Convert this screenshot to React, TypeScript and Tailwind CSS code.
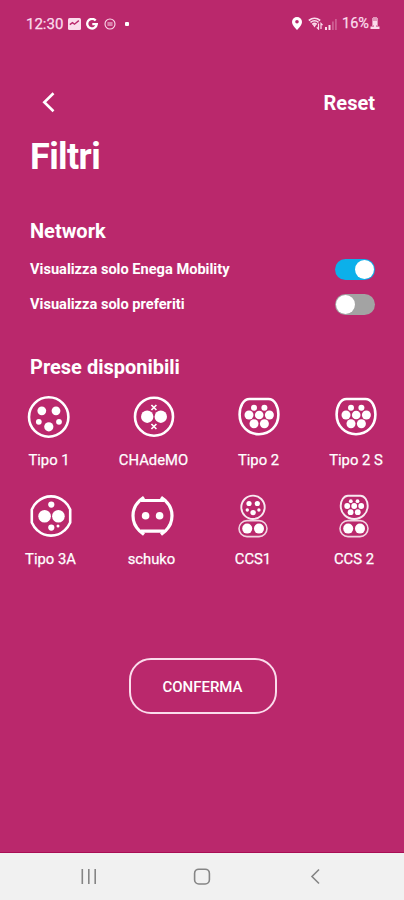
import { useState, type ReactNode } from "react";
import clsx from "clsx";

type Dot = [cx: number, cy: number, r: number];

function Dots({ items }: { items: Dot[] }) {
  return (
    <g fill="#fff" stroke="none">
      {items.map(([cx, cy, r]) => (
        <circle key={`${cx}-${cy}`} cx={cx} cy={cy} r={r} />
      ))}
    </g>
  );
}

function PlugIcon({ children }: { children: ReactNode }) {
  return (
    <svg width="44" height="44" viewBox="0 0 44 44" fill="none" stroke="#fff" strokeWidth="2.6" aria-hidden>
      {children}
    </svg>
  );
}

const typeTwoDots: Dot[] = [
  [17, 12.8, 3],
  [27.4, 12.8, 3],
  [12, 20, 4.5],
  [22.2, 20, 4.3],
  [32.4, 20, 4.5],
  [17, 28.8, 4.5],
  [27.4, 28.8, 4.5],
];

function TypeOne() {
  return (
    <PlugIcon>
      <circle cx="21.7" cy="22" r="19.7" />
      <Dots
        items={[
          [14.8, 15.8, 4.4],
          [29, 15.8, 4.4],
          [11.8, 26.8, 2.9],
          [32, 26.8, 2.9],
          [21.8, 31.8, 4.6],
        ]}
      />
    </PlugIcon>
  );
}

function Chademo() {
  return (
    <PlugIcon>
      <circle cx="22" cy="21.7" r="19" />
      <Dots
        items={[
          [15.2, 21.7, 6.2],
          [28.8, 21.7, 6.2],
        ]}
      />
      <path d="M19.4 10l5 5m0-5l-5 5M19.4 29l5 5m0-5l-5 5" strokeWidth="1.7" />
    </PlugIcon>
  );
}

function TypeTwo() {
  return (
    <PlugIcon>
      <path d="M12.5 4H31.5C37.5 4 41.4 11 41.4 19.5C41.4 31 33 39.2 22 39.2S2.6 31 2.6 19.5C2.6 11 6.5 4 12.5 4Z" />
      <Dots items={typeTwoDots} />
    </PlugIcon>
  );
}

function TypeThree() {
  return (
    <PlugIcon>
      <path d="M8.5 7.6A20 20 0 0 1 35.5 7.6Q39 10.5 41.2 15.5V28.5Q39 33.5 35.5 36.4A20 20 0 0 1 8.5 36.4Q5 33.5 2.8 28.5V15.5Q5 10.5 8.5 7.6Z" strokeLinejoin="round" />
      <Dots
        items={[
          [22.3, 10.6, 3.1],
          [15.6, 22.3, 6.3],
          [29.4, 22.3, 6.3],
          [22.3, 33.6, 3.1],
          [29, 32, 1.5],
        ]}
      />
    </PlugIcon>
  );
}

function Schuko() {
  return (
    <PlugIcon>
      <path
        d="M14 3.2L9.5 6.8C5.5 10.5 3 15.5 3 21.8S5.5 33.1 9.5 36.8L14 40.4M31 3.2L35.5 6.8C39.5 10.5 42 15.5 42 21.8S39.5 33.1 35.5 36.8L31 40.4"
        strokeWidth="3.2"
      />
      <path d="M11 6.5H34M11 37.2H34" strokeWidth="3.2" />
      <Dots
        items={[
          [15.6, 21.8, 3.8],
          [29.6, 21.8, 3.8],
        ]}
      />
    </PlugIcon>
  );
}

function ComboPins() {
  return (
    <>
      <rect x="8" y="26.6" width="28" height="16" rx="8" strokeWidth="1.6" strokeOpacity=".8" />
      <Dots
        items={[
          [16.2, 34.6, 5],
          [28, 34.6, 5],
        ]}
      />
    </>
  );
}

function ComboOne() {
  return (
    <PlugIcon>
      <circle cx="22" cy="13.3" r="11.7" strokeWidth="1.9" strokeOpacity=".9" />
      <Dots
        items={[
          [18, 9.5, 2.6],
          [26.3, 9.5, 2.6],
          [16.3, 16, 1.7],
          [27.9, 16, 1.7],
          [22.1, 18.6, 2.7],
        ]}
      />
      <ComboPins />
    </PlugIcon>
  );
}

function ComboTwo() {
  return (
    <PlugIcon>
      <path
        d="M16 1.7H28.4C32.5 1.7 35.7 6.3 35.7 11.8C35.7 19.4 29.6 25 22.2 25S8.7 19.4 8.7 11.8C8.7 6.3 11.9 1.7 16 1.7Z"
        strokeWidth="1.9"
        strokeOpacity=".9"
      />
      <Dots
        items={[
          [18.8, 7.2, 1.9],
          [25.5, 7.2, 1.9],
          [15.2, 12, 2.9],
          [22.2, 12, 2.9],
          [29.2, 12, 2.9],
          [18.6, 18.2, 2.9],
          [25.8, 18.2, 2.9],
        ]}
      />
      <ComboPins />
    </PlugIcon>
  );
}

const firstRow = [
  { label: "Tipo 1", width: "w-[98px]", Icon: TypeOne },
  { label: "CHAdeMO", width: "w-[111px]", Icon: Chademo },
  { label: "Tipo 2", width: "w-[99px]", Icon: TypeTwo },
  { label: "Tipo 2 S", width: "w-[96px]", Icon: TypeTwo },
];

const secondRow = [
  { label: "Tipo 3A", width: "w-[101px]", Icon: TypeThree },
  { label: "schuko", width: "w-[101px]", Icon: Schuko },
  { label: "CCS1", width: "w-[102px]", Icon: ComboOne },
  { label: "CCS 2", width: "w-[100px]", Icon: ComboTwo },
];

function PlugRow({ plugs }: { plugs: typeof firstRow }) {
  return (
    <div className="flex">
      {plugs.map(({ label, width, Icon }) => (
        <button key={label} type="button" className={clsx("flex flex-col items-center gap-[11px]", width)}>
          <Icon />
          <span className="text-[14.8px] leading-5 whitespace-nowrap [-webkit-text-stroke:0.25px_white]">{label}</span>
        </button>
      ))}
    </div>
  );
}

function Toggle({ label, initial }: { label: string; initial: boolean }) {
  const [on, setOn] = useState(initial);

  return (
    <div className="flex h-[35px] items-center justify-between">
      <span className="text-[14.6px] font-bold">{label}</span>
      <button
        type="button"
        role="switch"
        aria-checked={on}
        aria-label={label}
        onClick={() => setOn(!on)}
        className={clsx("flex h-[21px] w-10 items-center rounded-full px-px", on ? "justify-end bg-[#0cb0ea]" : "justify-start bg-[#a3a3a3]")}
      >
        <span className="size-[19px] rounded-full bg-white" />
      </button>
    </div>
  );
}

function StatusBar() {
  return (
    <div className="flex h-[47px] items-center justify-between pr-6 pl-[26px] text-[#fbdcec]">
      <div className="flex items-center">
        <span className="w-[37px] pt-px text-[15px] whitespace-nowrap [-webkit-text-stroke:0.25px_#fbdcec]">12:30</span>
        <svg className="ml-[5px]" width="13" height="12" viewBox="0 0 13 12" aria-hidden>
          <rect width="13" height="12" rx="1.5" fill="currentColor" />
          <path d="M1.8 6.6L4.5 4.6L6.5 6.2L10.8 2.6" stroke="#ba286c" strokeWidth="1.4" fill="none" />
        </svg>
        <svg className="ml-[5px]" width="12" height="12" viewBox="0 0 12 12" aria-hidden>
          <path d="M9.7 2.6A4.8 4.8 0 1 0 10.8 6.2H6.3" fill="none" stroke="#fff" strokeWidth="2.3" />
        </svg>
        <svg className="ml-[6px]" width="12" height="12" viewBox="0 0 12 12" fill="none" stroke="currentColor" aria-hidden>
          <circle cx="6" cy="6" r="5" strokeWidth="1.1" />
          <path d="M3.4 5H8.6M3.4 7H8.6" strokeWidth="1" />
        </svg>
        <span className="ml-[9px] size-[4px] rounded-[1px] bg-white" />
      </div>
      <div className="flex items-center">
        <svg width="10" height="13" viewBox="0 0 10 13" aria-hidden>
          <path d="M5 0A5 5 0 0 1 10 5C10 8.4 5 13 5 13S0 8.4 0 5A5 5 0 0 1 5 0Z" fill="#fff" />
          <circle cx="5" cy="4.8" r="1.8" fill="#ba286c" />
        </svg>
        <svg className="ml-[6px]" width="15" height="13" viewBox="0 0 15 13" fill="none" stroke="currentColor" aria-hidden>
          <path d="M.8 3.5Q6.5-1 12.2 3.5M2.5 5.4Q6.5 2.2 10.5 5.4M4.3 7.3Q6.5 5.5 8.7 7.3" strokeWidth="1.6" />
          <path d="M6.5 10.5L4.5 7.2H8.5Z" fill="currentColor" stroke="none" />
          <path d="M10.5 6.5V12L8.8 10.3M13 12V6.5L14.6 8.2" strokeWidth="1.2" />
        </svg>
        <svg className="ml-[2px]" width="12" height="12" viewBox="0 0 12 12" fill="currentColor" aria-hidden>
          <path d="M0 9H2V12H0ZM3.5 7H5.5V12H3.5Z" />
          <path d="M7 3.5H8.8V12H7ZM10 1H11.8V12H10Z" opacity=".3" />
        </svg>
        <span className="ml-[5px] w-[27px] pt-px text-[14.5px] whitespace-nowrap [-webkit-text-stroke:0.25px_#fbdcec]">16%</span>
        <svg className="ml-px" width="10" height="13" viewBox="0 0 10 13" fill="currentColor" aria-hidden>
          <path d="M3 0H7V1H8V9H2V1H3Z" opacity=".6" />
          <path d="M3 4H7V8H6V9.5H9.5V12H.5V9.5H4V8H3Z" />
        </svg>
      </div>
    </div>
  );
}

function SystemNav() {
  return (
    <nav className="flex h-[47px] items-center bg-[#f1f1f1]">
      <svg width="404" height="47" viewBox="0 0 404 47" fill="none" stroke="#858585" strokeWidth="1.6" aria-hidden>
        <path d="M82.3 16V31M88.8 16V31M95.2 16V31" />
        <rect x="194.6" y="16.2" width="14.8" height="14.8" rx="4.2" />
        <path d="M319 16.5L312 23.5L319 30.5" />
      </svg>
    </nav>
  );
}

export default function App() {
  return (
    <div className="flex h-[900px] w-[404px] flex-col overflow-hidden bg-[#ba286c] font-['Roboto',sans-serif] text-white">
      <StatusBar />
      <header className="mt-[37px] flex h-9 items-center justify-between pr-[29px] pl-[41px]">
        <button type="button" aria-label="Indietro">
          <svg width="14" height="22" viewBox="0 0 14 22" fill="none" stroke="#fff" strokeWidth="2.6" aria-hidden>
            <path d="M12.5 2.2L3.3 11.2L12.5 20.2" />
          </svg>
        </button>
        <button type="button" className="pt-px text-[20px] font-bold">
          Reset
        </button>
      </header>
      <main className="flex flex-1 flex-col">
        <h1 className="mt-[14px] pl-[30px] text-[36px] leading-[46px] font-bold tracking-[-0.6px]">Filtri</h1>
        <section className="mt-[38px] pr-[29px] pl-[30px]">
          <h2 className="text-[20px] leading-[26px] font-bold">Network</h2>
          <div className="mt-2">
            <Toggle label="Visualizza solo Enega Mobility" initial />
            <Toggle label="Visualizza solo preferiti" initial={false} />
          </div>
        </section>
        <section className="mt-[32px]">
          <h2 className="pl-[30px] text-[20px] leading-[26px] font-bold">Prese disponibili</h2>
          <div className="mt-[15px] flex flex-col gap-6">
            <PlugRow plugs={firstRow} />
            <PlugRow plugs={secondRow} />
          </div>
        </section>
        <button
          type="button"
          className="mt-[89px] ml-px h-14 w-[148px] self-center rounded-[22px] border-2 border-[#fbdcec] pt-0.5 text-[15px] font-medium"
        >
          CONFERMA
        </button>
      </main>
      <div className="h-px bg-[#a80e55]" />
      <SystemNav />
    </div>
  );
}
